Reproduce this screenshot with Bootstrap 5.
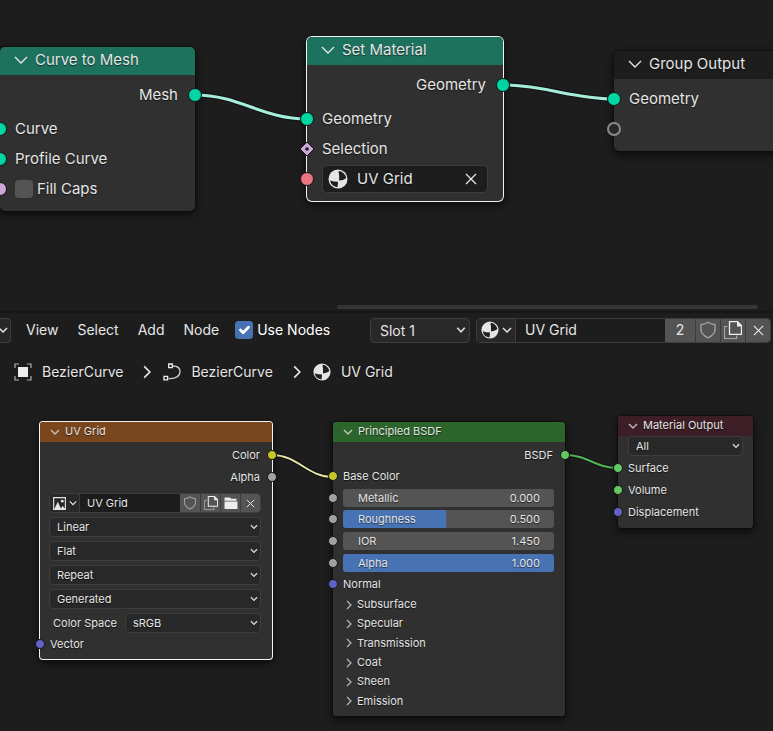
<!DOCTYPE html>
<html lang="en" data-bs-theme="dark">
<head>
<meta charset="utf-8">
<meta name="viewport" content="width=device-width, initial-scale=1">
<title>Node Editor</title>
<link href="https://cdn.jsdelivr.net/npm/bootstrap@5.3.0/dist/css/bootstrap.min.css" rel="stylesheet">
<style>
  :root { --ink: #e5e5e5; --edge: #3d3d3d; --node: #303030; --field: #1d1d1d; --drop: #282828; --btn: #545454; --blue: #4772b3; }
  body { font-family: Inter, "Noto Sans", sans-serif; font-size: 14px; line-height: 20px; background: #1d1d1d; color: var(--ink); overflow: hidden; }
  button, input, select { font: inherit; color: inherit; }
  .upper { min-height: 311px; border-bottom: 1px solid #1d1d1d; }
  .hscroll { left: 337px; right: 15px; bottom: 1px; height: 4px; border-radius: 2px; background: #353535; }
  .topbar { height: 37px; padding: 0 2px 1px 0; border-top: 2px solid #161616; }
  .type-pick { width: 11px; height: 25px; margin-right: 15px; padding: 0; background: var(--drop); border: 1px solid var(--edge); border-left: 0; border-radius: 0 4px 4px 0; }
  .menus { gap: 19px; }
  .menu-link { color: var(--ink); text-decoration: none; }
  .menu-link:hover { color: #fff; }
  .links { inset: 0; width: 100%; height: 100%; }
  .links path { fill: none; }

  .node { background: var(--node); border-radius: 5px; box-shadow: 0 3px 8px 1px #0009, 0 0 0 1px #151515; text-shadow: 0 1px 1px #0009; }
  .node.active { box-shadow: 0 0 0 1px #f2f2f2, 0 3px 8px 1px #000a; }
  .node-title { border-radius: 5px 5px 0 0; background: var(--tint); }
  .twist { background: none; border: 0; padding: 0; display: flex; align-items: center; width: 100%; text-align: left; text-shadow: inherit; }
  .big { font-size: 15px; line-height: 30px; padding-bottom: 7px; }
  .big .node-title { height: 28px; padding-left: 14px; margin-bottom: 5px; }
  .big .twist { gap: 7px; line-height: 26px; }
  .big .slot { height: 30px; padding: 0 15px; }
  .big .outs { margin-bottom: 4px; padding-right: 17px; }
  .small-node { font-size: 11px; line-height: 20px; border-radius: 3px; padding-bottom: 5px; }
  .small-node .node-title { height: 20px; padding-left: 10px; border-radius: 3px 3px 0 0; }
  .small-node .twist { gap: 5px; line-height: 19px; }
  .small-node .twist svg { opacity: .75; }
  .small-node .slot { padding: 0 10px; }
  .small-node .slot.out { padding-right: 12px; }
  .slot { position: relative; display: flex; align-items: center; }
  .out { justify-content: flex-end; }

  .sock { position: absolute; top: 50%; left: 0; width: 10px; height: 10px; border-radius: 50%; background: var(--c); border: 1px solid #151515; transform: translate(-50%, -50%); }
  .big .sock { width: 14px; height: 14px; }
  .out .sock { left: 100%; }
  .sock.open { background: #282828; border: 2px solid #8a8a8a; }
  .sock-diamond { position: absolute; top: 50%; left: 0; transform: translate(-50%, -50%); }
  .geo { --c: #00d6a3; } .boo { --c: #cca6d6; } .mat { --c: #eb7582; } .col { --c: #c7c729; }
  .val { --c: #a1a1a1; } .vec { --c: #6363c7; } .shd { --c: #63c763; }

  .tick { width: 18px; height: 18px; margin: 0; border: 0; border-radius: 3px; background-color: var(--btn); }
  .tick:checked { background-color: var(--blue); }
  .pick { min-width: 0; background-color: var(--drop); border: 1px solid var(--edge); border-radius: 4px; color: var(--ink); padding: 0 18px 0 7px; height: 20px; font-size: 11px; line-height: 18px; text-shadow: inherit;
    background-image: url("data:image/svg+xml,%3Csvg xmlns='http://www.w3.org/2000/svg' viewBox='0 0 8 6'%3E%3Cpath d='M1 1.2 4 4.4 7 1.2' fill='none' stroke='%23dddddd' stroke-width='1.3'/%3E%3C/svg%3E");
    background-size: 8px 6px; background-position: right 2px center; }
  .pick.tall { width: 100px; height: 25px; margin-right: 6px; padding-left: 9px; font-size: 14px; line-height: 23px; background-size: 10px 8px; background-position: right 3px center; }
  .id-row { border: 1px solid var(--edge); border-radius: 4px; overflow: hidden; background: var(--field); }
  .id-row button { display: flex; align-items: center; justify-content: center; border: 0; padding: 0; background: var(--btn); text-shadow: inherit; }
  .id-row .kind { background: var(--drop); border-right: 1px solid var(--edge); gap: 3px; }
  .id-row button + button { border-left: 1px solid #3c3c3c; }
  .id-row input { min-width: 0; background: none; border: 0; outline: 0; text-shadow: inherit; }
  .wide-id { width: 295px; height: 25px; }
  .wide-id .kind { width: 39px; } .wide-id .users { width: 30px; } .wide-id .act { width: 25px; }
  .wide-id input { padding: 0 9px; }
  .image-id { height: 20px; }
  .image-id .kind { width: 30px; } .image-id .act { width: 20px; }
  .image-id input { padding: 0 7px; }
  .mat-id { height: 28px; border-radius: 5px; }
  .mat-id button { width: 32px; background: none; }
  .mat-id input { padding: 0 9px; }
  .mat-id svg { margin-left: 5px; }
  .mat-id button svg { margin: 0; }

  .even { display: grid; grid-auto-rows: 1fr; }
  .image-outs { min-height: 46px; padding-top: 2px; }
  .controls { display: grid; gap: 4px; padding: 5px 11px 0 9px; }
  .last-in { height: 21px; }
  .inputs { min-height: 153px; padding-top: 2px; }
  .surf { min-height: 67px; padding-top: 1px; }
  .panels { min-height: 116px; padding-left: 11px; }
  .small-node .panels .twist { gap: 3px; line-height: 19px; }
  .slide { position: relative; flex: 1; height: 18px; margin: 0 1px 0 0; display: flex; justify-content: space-between; }
  .slide input { -webkit-appearance: none; appearance: none; position: absolute; inset: 0; width: 100%; height: 100%; margin: 0; border-radius: 3px; background: linear-gradient(to right, var(--blue) var(--fill), var(--btn) var(--fill)); }
  .slide input::-webkit-slider-thumb { -webkit-appearance: none; width: 1px; height: 18px; background: none; }
  .slide label, .slide output { position: relative; line-height: 18px; padding: 0 14px 0 15px; pointer-events: none; }

  .lower { flex: 1; min-height: 380px; }
  .crumbs { padding: 14px; text-shadow: 0 1px 1px #0009; }
  .crumbs .sep { margin: 0 9px 0 17px; }
  .crumb { display: flex; align-items: center; gap: 10px; color: var(--ink); text-decoration: none; }
  .at-curve { left: 0; top: 47px; width: 195px; }
  .at-setmat { left: 307px; top: 37px; width: 196px; }
  .at-group { left: 614px; top: 51px; right: -24px; }
  .at-image { left: 40px; top: 74px; width: 232px; }
  .at-bsdf { left: 333px; top: 74px; width: 232px; }
  .at-output { left: 618px; top: 68px; width: 135px; }
</style>
<script src="https://cdn.jsdelivr.net/npm/bootstrap@5.3.0/dist/js/bootstrap.bundle.min.js"></script>
</head>
<body class="d-flex flex-column min-vh-100">
<svg class="d-none" aria-hidden="true">
  <symbol id="i-down" viewBox="0 0 14 14"><path d="M1 4l6 6 6-6" fill="none" stroke="currentColor" stroke-width="1.400"/></symbol>
  <symbol id="i-downs" viewBox="0 0 10 10"><path d="M1 3l4 4 4-4" fill="none" stroke="currentColor" stroke-width="1.500"/></symbol>
  <symbol id="i-right" viewBox="0 0 10 10"><path d="M3 1l4 4-4 4" fill="none" stroke="currentColor" stroke-width="1.200"/></symbol>
  <symbol id="i-x" viewBox="0 0 12 12"><path d="M1 1l10 10M11 1L1 11" fill="none" stroke="currentColor" stroke-width="1.300"/></symbol>
  <symbol id="i-mat" viewBox="0 0 20 20"><circle cx="10" cy="10" r="9.500" fill="#e5e5e5"/><path d="M10.500 2a8 8 0 0 1 7.600 7.200q-3 2.200-7 2.400 .4-5-.6-9.600zM2 11.400q3.500 1.400 8 1.400 0 3-.6 5.400A8 8 0 0 1 2 11.400z" fill="#1f1f1f"/></symbol>
  <symbol id="i-shield" viewBox="0 0 18 18"><path d="M9 1.200q3.500 2.300 7 2.300v5q0 5-7 8.300-7-3.300-7-8.300v-5q3.500 0 7-2.300z" fill="none" stroke="#a5a5a5" stroke-width="1.300"/></symbol>
  <symbol id="i-copy" viewBox="0 0 18 18"><path d="M3.500 5.500h-3v12h12v-3" fill="none" stroke="#a8a8a8" stroke-width="1.200"/><path d="M5.500 .7h8l4 4v8.600h-12z" fill="none" stroke="#eee" stroke-width="1.300"/><path d="M13 .5v5h5z" fill="#eee"/></symbol>
  <symbol id="i-folder" viewBox="0 0 14 13"><path d="M0 4V.5h6l1 1.500h6V4zM0 5h14v8H0z" fill="#eee"/></symbol>
  <symbol id="i-image" viewBox="0 0 14 14"><path d="M.7 .7h12.600v12.600H.7z" fill="none" stroke="#e5e5e5" stroke-width="1.200"/><path d="M1.500 13l3.700-8 3.600 8z" fill="#e5e5e5"/><path d="M8.500 13l1.800-3.500L13 13z" fill="#e5e5e5"/><circle cx="10" cy="4.500" r="1.500" fill="#e5e5e5"/></symbol>
</svg>

<section class="upper position-relative overflow-hidden">
  <svg class="links position-absolute" aria-hidden="true">
    <path d="M195 95C240 95 262 119 307 119M503 85C545 85 572 99 615 99" stroke="#111" stroke-width="5"/>
    <path d="M195 95C240 95 262 119 307 119M503 85C545 85 572 99 615 99" stroke="#a5eedb" stroke-width="3"/>
  </svg>
  <article class="node big at-curve position-absolute">
    <div class="node-title" style="--tint:#1d725e"><button class="twist"><svg width="14" height="14"><use href="#i-down"/></svg>Curve to Mesh</button></div>
    <div class="slot out outs">Mesh<i class="sock geo"></i></div>
    <div class="slot">Curve<i class="sock geo"></i></div>
    <div class="slot">Profile Curve<i class="sock geo"></i></div>
    <div class="slot"><input class="tick form-check-input" type="checkbox" id="caps"><label class="ps-1" for="caps">Fill Caps</label><i class="sock boo"></i></div>
  </article>
  <article class="node big active at-setmat position-absolute">
    <div class="node-title" style="--tint:#1d725e"><button class="twist"><svg width="14" height="14"><use href="#i-down"/></svg>Set Material</button></div>
    <div class="slot out outs">Geometry<i class="sock geo"></i></div>
    <div class="slot">Geometry<i class="sock geo"></i></div>
    <div class="slot">Selection<svg class="sock-diamond" width="16" height="16" viewBox="0 0 16 16"><path d="M8 1l7 7-7 7-7-7z" fill="#cca6d6" stroke="#151515"/><circle cx="8" cy="8" r="1.800" fill="#151515"/></svg></div>
    <div class="slot">
      <div class="id-row mat-id d-flex flex-fill align-items-center"><svg class="flex-shrink-0" width="20" height="20"><use href="#i-mat"/></svg><input class="flex-fill w-100" aria-label="Material" value="UV Grid"><button class="flex-shrink-0" aria-label="Clear material"><svg width="12" height="12"><use href="#i-x"/></svg></button></div>
      <i class="sock mat"></i></div>
  </article>
  <article class="node big at-group position-absolute">
    <div class="node-title" style="--tint:#1d1d1d"><button class="twist"><svg width="14" height="14"><use href="#i-down"/></svg>Group Output</button></div>
    <div class="slot">Geometry<i class="sock geo"></i></div>
    <div class="slot"><i class="sock open"></i></div>
  </article>
  <div class="hscroll position-absolute"></div>
</section>

<header class="topbar d-flex align-items-center">
  <button class="type-pick d-flex align-items-center" aria-label="Shader type"><svg width="8" height="10" viewBox="2 0 8 10"><path d="M1 3l4 4 4-4" fill="none" stroke="currentColor" stroke-width="1.500"/></svg></button>
  <nav class="menus d-flex align-items-center" aria-label="Editor">
    <a class="menu-link" href="#">View</a><a class="menu-link" href="#">Select</a><a class="menu-link" href="#">Add</a><a class="menu-link" href="#">Node</a>
  </nav>
  <div class="d-flex align-items-center gap-1 ms-3"><input class="tick form-check-input" type="checkbox" id="useNodes" checked><label class="text-white" for="useNodes">Use Nodes</label></div>
  <select class="form-select pick tall ms-auto" aria-label="Slot"><option>Slot 1</option></select>
  <div class="id-row wide-id d-flex">
    <button class="kind flex-shrink-0" aria-label="Browse material"><svg width="18" height="18"><use href="#i-mat"/></svg><svg width="10" height="10"><use href="#i-downs"/></svg></button>
    <input class="flex-fill" aria-label="Material name" value="UV Grid">
    <button class="users flex-shrink-0">2</button>
    <button class="act flex-shrink-0" aria-label="Fake user"><svg width="18" height="18"><use href="#i-shield"/></svg></button>
    <button class="act flex-shrink-0" aria-label="New material"><svg width="18" height="18"><use href="#i-copy"/></svg></button>
    <button class="act flex-shrink-0" aria-label="Unlink"><svg width="11" height="11"><use href="#i-x"/></svg></button>
  </div>
</header>

<section class="lower position-relative overflow-hidden">
  <nav class="crumbs d-flex align-items-center" aria-label="Path">
    <a class="crumb" href="#"><svg width="18" height="18" viewBox="0 0 18 18"><path d="M1 5V1h4M13 1h4v4M17 13v4h-4M5 17H1v-4" fill="none" stroke="#aaa" stroke-width="1.200"/><path d="M4 4h10v10H4z" fill="#eee"/></svg>BezierCurve</a>
    <svg class="sep" width="14" height="14"><use href="#i-right"/></svg>
    <a class="crumb" href="#"><svg width="18" height="18" viewBox="0 0 18 18"><path d="M5.500 15.500C13 16 17 13 17 8.500 17 5 14 3 10 3" fill="none" stroke="#ccc" stroke-width="1.300"/><path d="M5.700 1h3.600v3.600H5.700zM1 13.300h3.600v3.600H1z" fill="none" stroke="#eee" stroke-width="1.300"/></svg>BezierCurve</a>
    <svg class="sep" width="14" height="14"><use href="#i-right"/></svg>
    <a class="crumb" href="#"><svg width="18" height="18"><use href="#i-mat"/></svg>UV Grid</a>
  </nav>
  <svg class="links position-absolute pe-none" aria-hidden="true">
    <g stroke="#111" stroke-width="4"><path d="M272 107C298 107 307 129 333 129"/><path d="M565 107C588 107 595 120 618 120"/></g>
    <g stroke-width="2"><path d="M272 107C298 107 307 129 333 129" stroke="#e4e4a4"/><path d="M565 107C588 107 595 120 618 120" stroke="#55b455"/></g>
  </svg>
  <article class="node small-node active at-image position-absolute">
    <div class="node-title" style="--tint:#79461d"><button class="twist"><svg width="10" height="10"><use href="#i-downs"/></svg>UV Grid</button></div>
    <div class="even image-outs">
      <div class="slot out">Color<i class="sock col"></i></div>
      <div class="slot out">Alpha<i class="sock val"></i></div>
    </div>
    <div class="controls">
      <div class="id-row image-id d-flex">
        <button class="kind flex-shrink-0" aria-label="Browse image"><svg width="13" height="13"><use href="#i-image"/></svg><svg width="8" height="8"><use href="#i-downs"/></svg></button>
        <input class="flex-fill" aria-label="Image name" value="UV Grid">
        <button class="act flex-shrink-0" aria-label="Fake user"><svg width="14" height="14"><use href="#i-shield"/></svg></button>
        <button class="act flex-shrink-0" aria-label="New image"><svg width="14" height="14"><use href="#i-copy"/></svg></button>
        <button class="act flex-shrink-0" aria-label="Open image"><svg width="14" height="12"><use href="#i-folder"/></svg></button>
        <button class="act flex-shrink-0" aria-label="Unlink image"><svg width="9" height="9"><use href="#i-x"/></svg></button>
      </div>
      <select class="form-select pick" aria-label="Interpolation"><option>Linear</option></select>
      <select class="form-select pick" aria-label="Projection"><option>Flat</option></select>
      <select class="form-select pick" aria-label="Extension"><option>Repeat</option></select>
      <select class="form-select pick" aria-label="Source"><option>Generated</option></select>
      <div class="d-flex align-items-center gap-2"><label class="text-nowrap ps-1 pe-0" for="space">Color Space</label><select class="form-select pick" id="space"><option>sRGB</option></select></div>
    </div>
    <div class="slot last-in">Vector<i class="sock vec"></i></div>
  </article>

  <article class="node small-node at-bsdf position-absolute">
    <div class="node-title" style="--tint:#2b652b"><button class="twist"><svg width="10" height="10"><use href="#i-downs"/></svg>Principled BSDF</button></div>
    <div class="even inputs">
      <div class="slot out">BSDF<i class="sock shd"></i></div>
      <div class="slot">Base Color<i class="sock col"></i></div>
      <div class="slot"><div class="slide"><input type="range" id="metal" min="0" max="1" step="0.001" value="0" style="--fill:0%"><label for="metal">Metallic</label><output for="metal">0.000</output></div><i class="sock val"></i></div>
      <div class="slot"><div class="slide"><input type="range" id="rough" min="0" max="1" step="0.001" value="0.5" style="--fill:49%"><label for="rough">Roughness</label><output for="rough">0.500</output></div><i class="sock val"></i></div>
      <div class="slot"><div class="slide"><input type="range" id="ior" min="1" max="1000" step="0.001" value="1.45" style="--fill:0%"><label for="ior">IOR</label><output for="ior">1.450</output></div><i class="sock val"></i></div>
      <div class="slot"><div class="slide"><input type="range" id="alpha" min="0" max="1" step="0.001" value="1" style="--fill:100%"><label for="alpha">Alpha</label><output for="alpha">1.000</output></div><i class="sock val"></i></div>
      <div class="slot">Normal<i class="sock vec"></i></div>
    </div>
    <div class="even panels">
      <button class="twist"><svg width="10" height="10"><use href="#i-right"/></svg>Subsurface</button>
      <button class="twist"><svg width="10" height="10"><use href="#i-right"/></svg>Specular</button>
      <button class="twist"><svg width="10" height="10"><use href="#i-right"/></svg>Transmission</button>
      <button class="twist"><svg width="10" height="10"><use href="#i-right"/></svg>Coat</button>
      <button class="twist"><svg width="10" height="10"><use href="#i-right"/></svg>Sheen</button>
      <button class="twist"><svg width="10" height="10"><use href="#i-right"/></svg>Emission</button>
    </div>
  </article>

  <article class="node small-node at-output position-absolute">
    <div class="node-title" style="--tint:#3d1d26"><button class="twist"><svg width="10" height="10"><use href="#i-downs"/></svg>Material Output</button></div>
    <div class="slot"><select class="form-select pick" aria-label="Target"><option>All</option></select></div>
    <div class="even surf">
      <div class="slot">Surface<i class="sock shd"></i></div>
      <div class="slot">Volume<i class="sock shd"></i></div>
      <div class="slot">Displacement<i class="sock vec"></i></div>
    </div>
  </article>
</section>
</body>
</html>
